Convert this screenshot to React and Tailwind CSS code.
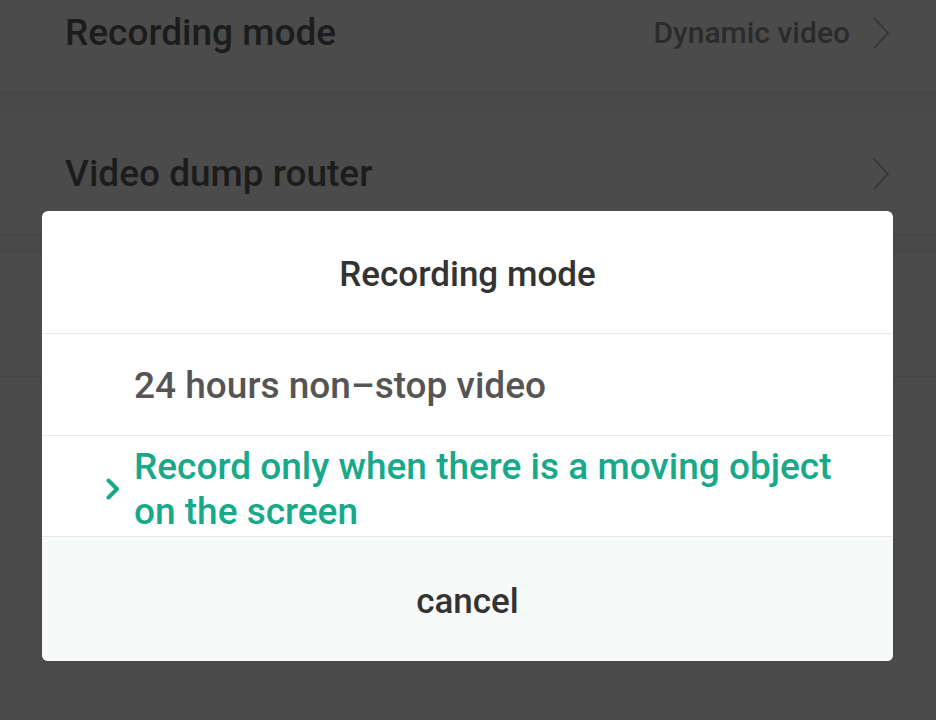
const font = { fontFamily: 'Roboto, "Noto Sans", sans-serif' }

function Chevron({ className }) {
  return (
    <svg className={className} width="18" height="32" viewBox="0 0 18 32" fill="none">
      <path d="M2 1 L16 16 L2 31" stroke="currentColor" strokeWidth="1.6" />
    </svg>
  )
}

export default function App() {
  return (
    <div className="relative h-[720px] w-[936px] overflow-hidden bg-[#4b4b4b]" style={font}>
      {/* dimmed settings list */}
      <div className="flex h-[92px] items-center justify-between pl-[65px] pr-[46px] border-b border-[#444]">
        <span className="pb-[26px] text-[37px] font-medium text-[#1c1c1c]">Recording mode</span>
        <div className="flex items-center gap-[22px] pb-[26px]">
          <span className="text-[30px] font-medium text-[#2b2b2b]">Dynamic video</span>
          <Chevron className="text-[#333]" />
        </div>
      </div>
      <div className="h-[19px] bg-[#494949] border-b border-[#444]" />
      <div className="flex h-[124px] items-center justify-between pl-[65px] pr-[46px] pt-[3px] border-b border-[#444]">
        <span className="text-[37px] font-medium text-[#1c1c1c]">Video dump router</span>
        <Chevron className="text-[#333]" />
      </div>
      <div className="h-[18px] bg-[#494949] border-b border-[#444]" />
      <div className="h-[124px] border-b border-[#444]" />

      {/* dialog */}
      <div className="absolute left-[42px] top-[211px] w-[851px] overflow-hidden rounded-[6px] bg-white">
        <div className="flex h-[123px] items-center justify-center border-b border-[#e8e8e8] pt-[6px]">
          <span className="text-[35px] font-medium text-[#333]">Recording mode</span>
        </div>
        <div className="flex h-[102px] items-center border-b border-[#e8e8e8] pl-[92px] pt-[3px]">
          <span className="text-[37px] font-medium text-[#555]">24 hours non–stop video</span>
        </div>
        <div className="flex h-[101px] items-center border-b border-[#e8e8e8] pt-[5px]">
          <div className="flex w-[92px] justify-end pr-[14px]">
            <svg width="14" height="22" viewBox="0 0 14 22" fill="none">
              <path d="M2.5 2.5 L11 11 L2.5 19.5" stroke="#17a98a" strokeWidth="4" strokeLinecap="round" strokeLinejoin="round" />
            </svg>
          </div>
          <span className="text-[37px] font-medium leading-[45px] text-[#17a98a]">
            Record only when there is a moving object
            <br />
            on the screen
          </span>
        </div>
        <div className="flex h-[124px] items-center justify-center bg-[#f8f9f9] pt-[6px]">
          <span className="text-[35px] font-medium text-[#333]">cancel</span>
        </div>
      </div>
    </div>
  )
}
